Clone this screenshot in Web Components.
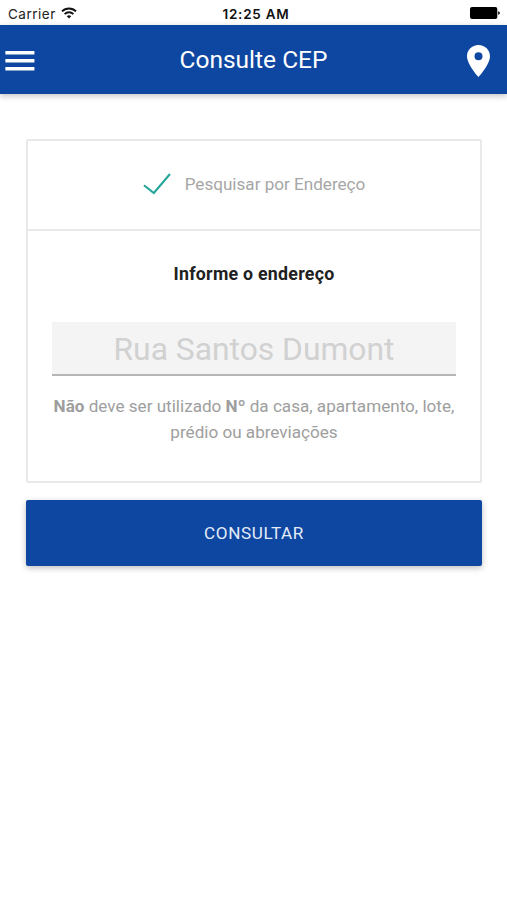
<!DOCTYPE html>
<html lang="pt-BR">
<head>
<meta charset="utf-8">
<meta name="viewport" content="width=device-width, initial-scale=1">
<title>Consulte CEP</title>
<style>
  body {
    margin: 0;
    min-height: 100vh;
    background: #fff;
    font-family: Roboto, "Liberation Sans", sans-serif;
    --primary: #0d47a1;
    --line: #e9e9e9;
    --muted: #9e9e9e;
  }

  main {
    display: flex;
    flex-direction: column;
    gap: 17px;
    padding: 45px 25px 0 26px;
  }
</style>
</head>
<body>
  <status-bar carrier="Carrier" time="12:25 AM"></status-bar>
  <nav-bar>Consulte CEP</nav-bar>
  <main>
    <search-card>
      <search-option slot="header">Pesquisar por Endereço</search-option>
      <address-field label="Informe o endereço" placeholder="Rua Santos Dumont">
        <b>Não</b> deve ser utilizado <b>Nº</b> da casa, apartamento, lote,<br>prédio ou abreviações
      </address-field>
    </search-card>
    <submit-button>Consultar</submit-button>
  </main>

<script>
  // Attach an open shadow root and fill it
  class BaseElement extends HTMLElement {
    constructor() {
      super();
      const tmpl = document.createElement("template");
      tmpl.innerHTML = this.constructor.markup;
      this.attachShadow({ mode: "open" });
      this.shadowRoot.appendChild(tmpl.content.cloneNode(true));
    }

    // Copy an attribute's value to the part of the same name
    fill(name) {
      this.shadowRoot.querySelector(`.${name}`).textContent = this.getAttribute(name);
    }
  }

  class StatusBar extends BaseElement {
    static get markup() {
      return `
        <style>
          :host {
            display: grid;
            grid-template-columns: 1fr auto 1fr;
            align-items: center;
            box-sizing: border-box;
            height: 25px;
            padding: 2px 7px 0 8px;
            color: #222;
            font: 13.5px/20px Inter, sans-serif;
          }
          .left { display: flex; align-items: center; gap: 5px; }
          .carrier { letter-spacing: .5px; }
          .time { color: #111; font-weight: 600; font-size: 13.5px; letter-spacing: .75px; padding-left: 4px; }
          .battery { justify-self: end; }
          svg { display: block; }
          .left svg { margin-top: -2px; }
          .battery { margin-top: -1px; }
        </style>
        <div class="left">
          <span class="carrier"></span>
          <svg width="16" height="12" viewBox="0 0 16 12" fill="none" stroke="#111" stroke-width="1.9" aria-hidden="true">
            <path d="M1 4.4a10 10 0 0 1 14 0"/>
            <path d="M3.6 7.1a6.3 6.3 0 0 1 8.8 0"/>
            <path d="M8 11.6 5.8 9.2a3.2 3.2 0 0 1 4.4 0z" fill="#111" stroke="none"/>
          </svg>
        </div>
        <span class="time"></span>
        <svg class="battery" width="30" height="12" viewBox="0 0 30 12" aria-hidden="true">
          <rect width="27.3" height="12" rx="2"/>
          <path d="M28.2 4.2c2.2.5 2.2 3.1 0 3.6z"/>
        </svg>`;
    }

    connectedCallback() {
      this.fill("carrier");
      this.fill("time");
    }
  }

  class NavBar extends BaseElement {
    static get markup() {
      return `
        <style>
          :host {
            display: grid;
            grid-template-columns: 36px 1fr 30px;
            align-items: center;
            box-sizing: border-box;
            height: 69px;
            padding: 2px 11px 0 5px;
            background: var(--primary);
            color: #fff;
            font-size: 24.5px;
            box-shadow: 0 2px 6px rgba(0, 0, 0, .24);
          }
          .title { text-align: center; margin-top: -3px; }
          svg { display: block; fill: currentColor; }
          .pin { justify-self: end; }
        </style>
        <svg width="30" height="20" viewBox="0 0 30 20" aria-label="Menu">
          <path d="M.4 0h29v3.4H.4zM.4 8h29v3.4H.4zM.4 16h29v3.4H.4z"/>
        </svg>
        <span class="title"><slot></slot></span>
        <svg class="pin" width="36" height="32" viewBox="0 0 36 32" aria-label="Local">
          <path fill-rule="evenodd" d="M18.500 0C12 0 7 5 7 11.200 7 19.600 18.500 32 18.500 32S30 19.600 30 11.200C30 5 25 0 18.500 0zm0 15.200a4 4 0 1 1 0-8 4 4 0 0 1 0 8z"/>
        </svg>`;
    }
  }

  class SearchCard extends BaseElement {
    static get markup() {
      return `
        <style>
          :host {
            display: block;
            box-sizing: border-box;
            height: 344px;
            border: 2px solid var(--line);
            border-radius: 2px;
          }
          header {
            height: 88px;
            border-bottom: 2px solid var(--line);
          }
        </style>
        <header><slot name="header"></slot></header>
        <slot></slot>`;
    }
  }

  class SearchOption extends BaseElement {
    static get markup() {
      return `
        <style>
          :host {
            display: flex;
            align-items: center;
            justify-content: center;
            gap: 14px;
            height: 86px;
            color: #a6a6a6;
            font-size: 17.1px;
          }
          svg { display: block; }
        </style>
        <svg width="28" height="22" viewBox="0 0 28 22" fill="none" stroke="#26a69a" stroke-width="2.1" aria-hidden="true">
          <path d="M1 12.200 10.800 20 27 1"/>
        </svg>
        <span><slot></slot></span>`;
    }
  }

  class AddressField extends BaseElement {
    static get markup() {
      return `
        <style>
          :host {
            display: block;
            padding: 30px 24px 0;
            text-align: center;
          }
          .label {
            display: block;
            color: #212121;
            font-size: 17.8px;
            font-weight: 700;
            letter-spacing: .25px;
            line-height: 26px;
          }
          .placeholder {
            box-sizing: border-box;
            height: 54px;
            margin-top: 35px;
            border-bottom: 2px solid #b5b5b5;
            background: #f4f4f4;
            color: #d1d1d1;
            font-size: 31.8px;
            line-height: 54px;
          }
          .hint {
            margin: 17px -10px 0;
            color: var(--muted);
            font-size: 17.1px;
            line-height: 26px;
          }
        </style>
        <label class="label"></label>
        <div class="placeholder" role="textbox" tabindex="0"></div>
        <div class="hint"><slot></slot></div>`;
    }

    connectedCallback() {
      this.fill("label");
      this.fill("placeholder");
    }
  }

  class SubmitButton extends BaseElement {
    static get markup() {
      return `
        <style>
          :host { display: block; }
          button {
            display: block;
            width: 100%;
            height: 66px;
            padding: 0;
            border: 0;
            border-radius: 2px;
            background: var(--primary);
            color: #e3ecf8;
            font: inherit;
            font-size: 17.1px;
            letter-spacing: .6px;
            text-transform: uppercase;
            box-shadow: 0 2px 6px rgba(0, 0, 0, .26);
          }
        </style>
        <button type="button"><slot></slot></button>`;
    }
  }

  window.customElements.define("status-bar", StatusBar);
  window.customElements.define("nav-bar", NavBar);
  window.customElements.define("search-card", SearchCard);
  window.customElements.define("search-option", SearchOption);
  window.customElements.define("address-field", AddressField);
  window.customElements.define("submit-button", SubmitButton);
</script>
</body>
</html>
